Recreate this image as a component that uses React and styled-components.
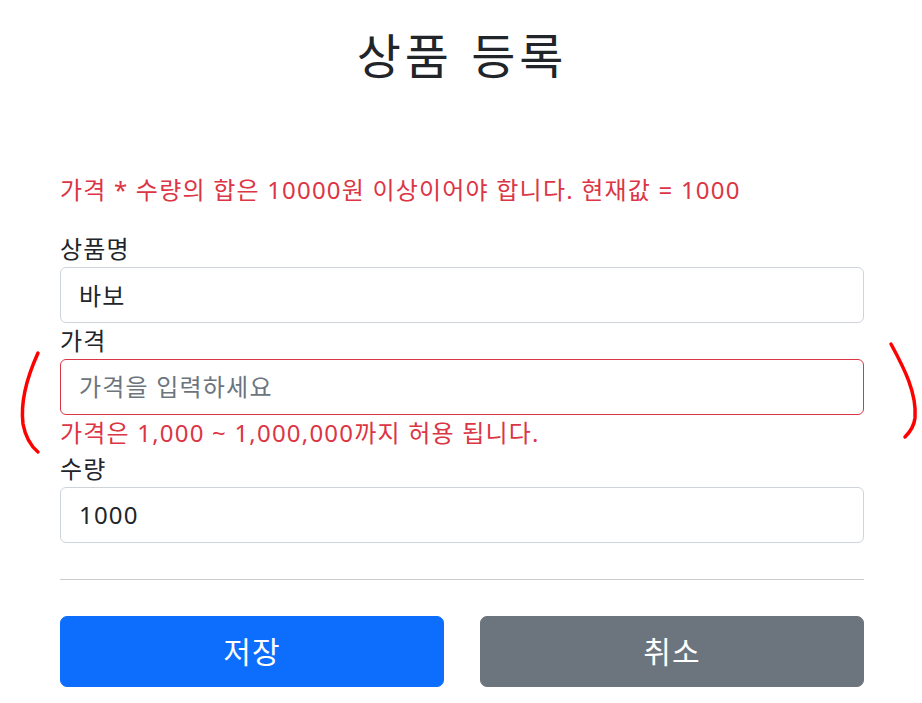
import styled, { createGlobalStyle } from 'styled-components';

const GlobalStyle = createGlobalStyle`
  * { box-sizing: border-box; }
  html, body {
    margin: 0;
    padding: 0;
    background: #fff;
    overflow: hidden;
  }
  body {
    font-family: "Noto Sans", "Noto Sans CJK KR", "Liberation Sans", sans-serif;
    font-size: 24px;
    line-height: 1.5;
    letter-spacing: 0.05em;
    color: #212529;
  }
`;

const Page = styled.div`
  position: relative;
  width: 922px;
  height: 703px;
  padding-left: 2px;
`;

const Container = styled.div`
  max-width: 840px;
  margin: 0 auto;
  padding: 0 18px;
`;

const Header = styled.div`
  padding: 27px 0 87px;
  text-align: center;
`;

const Title = styled.h2`
  margin: 0;
  font-size: 48px;
  font-weight: 400;
  line-height: 1.2;
  letter-spacing: 0.08em;
  word-spacing: 0.05em;
`;

const FieldError = styled.p`
  margin: 0 0 ${(p) => p.$gap || 0}px;
  color: #dc3545;
  line-height: 36px;
`;

const Field = styled.div``;

const Label = styled.label`
  display: block;
  line-height: 36px;
`;

const Input = styled.input`
  display: block;
  width: 100%;
  height: 56px;
  padding: 9px 18px;
  font-family: inherit;
  font-size: 24px;
  line-height: 1.5;
  letter-spacing: inherit;
  color: #212529;
  background: #fff;
  border: 1px solid ${(p) => (p.$invalid ? '#dc3545' : '#ced4da')};
  border-radius: 6px;
  outline: none;
  &::placeholder {
    color: #6c757d;
    opacity: 1;
  }
`;

const Divider = styled.hr`
  margin: 36px 0;
  border: 0;
  border-top: 1px solid #ccc;
`;

const ButtonRow = styled.div`
  display: grid;
  grid-template-columns: 1fr 1fr;
  gap: 36px;
`;

const Button = styled.button`
  height: 71px;
  font-family: inherit;
  font-size: 30px;
  line-height: 1.5;
  letter-spacing: inherit;
  color: #fff;
  background: ${(p) => (p.$secondary ? '#6c757d' : '#0d6efd')};
  border: 1px solid ${(p) => (p.$secondary ? '#6c757d' : '#0d6efd')};
  border-radius: 7px;
  cursor: pointer;
`;

const Annotation = styled.svg`
  position: absolute;
  left: 0;
  top: 0;
  pointer-events: none;
`;

export default function App() {
  return (
    <Page>
      <GlobalStyle />
      <Container>
        <Header>
          <Title>상품 등록</Title>
        </Header>
        <form onSubmit={(e) => e.preventDefault()}>
          <FieldError $gap={23}>가격 * 수량의 합은 10000원 이상이어야 합니다. 현재값 = 1000</FieldError>
          <Field>
            <Label>상품명</Label>
            <Input defaultValue="바보" />
          </Field>
          <Field>
            <Label>가격</Label>
            <Input $invalid placeholder="가격을 입력하세요" />
            <FieldError>가격은 1,000 ~ 1,000,000까지 허용 됩니다.</FieldError>
          </Field>
          <Field>
            <Label>수량</Label>
            <Input defaultValue="1000" />
          </Field>
          <Divider />
          <ButtonRow>
            <Button type="submit">저장</Button>
            <Button type="button" $secondary>취소</Button>
          </ButtonRow>
        </form>
      </Container>
      <Annotation width="922" height="703" viewBox="0 0 922 703">
        <path d="M38 353 C 28 375, 20 400, 23 424 C 26 440, 32 447, 38 452" fill="none" stroke="#ff0000" strokeWidth="3.5" strokeLinecap="round" />
        <path d="M891 344 C 904 368, 917 393, 915 418 C 914 427, 910 432, 905 437" fill="none" stroke="#ff0000" strokeWidth="3.5" strokeLinecap="round" />
      </Annotation>
    </Page>
  );
}
